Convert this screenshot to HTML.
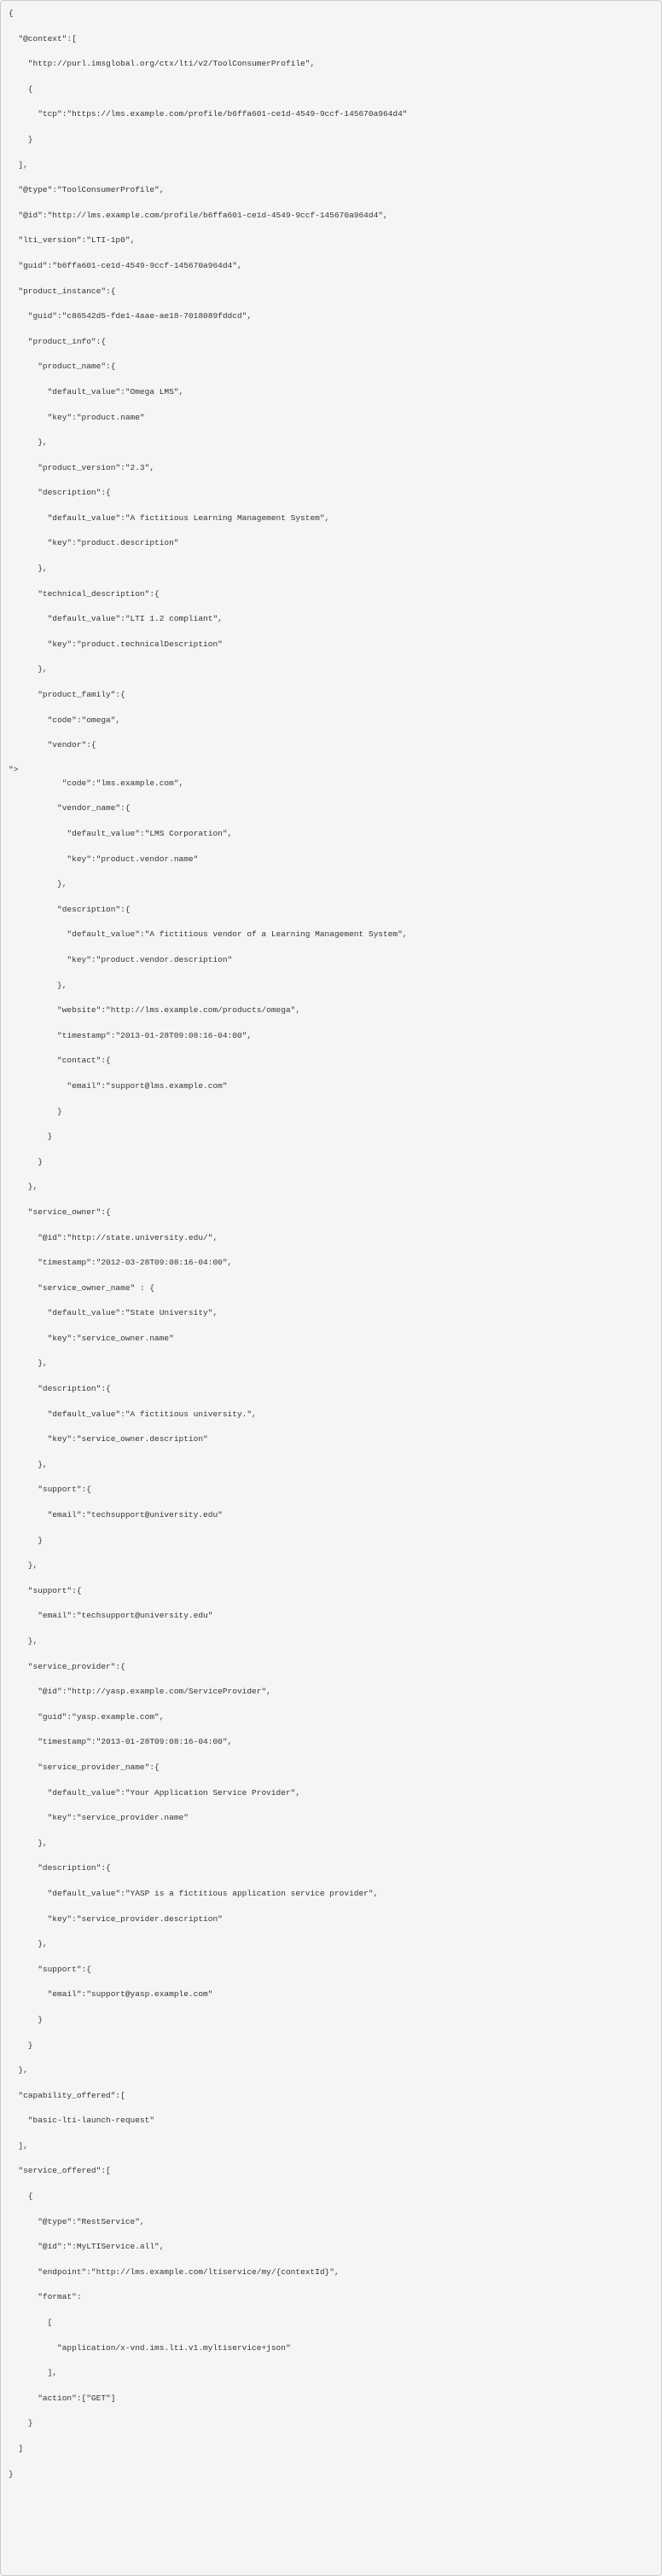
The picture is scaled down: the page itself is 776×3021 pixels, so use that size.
<!DOCTYPE html>
<html><head><meta charset="utf-8">
<style>
html,body{margin:0;padding:0;background:#fff;}
.box{position:absolute;left:0;top:0;width:774px;height:3019px;border:1px solid #ccc;border-radius:4px;background:#f5f5f5;}
.code{position:absolute;left:10px;top:1px;font-family:"Liberation Mono",monospace;font-size:9.5px;line-height:29.6px;color:#333;white-space:pre;}
.gap{position:relative;height:15px;}
.gap span{position:absolute;left:0;top:6.5px;line-height:15px;}
</style></head><body>
<div class="box"></div>
<div class="code"><div>{
  "@context":[
    "http://purl.imsglobal.org/ctx/lti/v2/ToolConsumerProfile",
    {
      "tcp":"https://lms.example.com/profile/b6ffa601-ce1d-4549-9ccf-145670a964d4"
    }
  ],
  "@type":"ToolConsumerProfile",
  "@id":"http://lms.example.com/profile/b6ffa601-ce1d-4549-9ccf-145670a964d4",
  "lti_version":"LTI-1p0",
  "guid":"b6ffa601-ce1d-4549-9ccf-145670a964d4",
  "product_instance":{
    "guid":"c86542d5-fde1-4aae-ae18-7018089fddcd",
    "product_info":{
      "product_name":{
        "default_value":"Omega LMS",
        "key":"product.name"
      },
      "product_version":"2.3",
      "description":{
        "default_value":"A fictitious Learning Management System",
        "key":"product.description"
      },
      "technical_description":{
        "default_value":"LTI 1.2 compliant",
        "key":"product.technicalDescription"
      },
      "product_family":{
        "code":"omega",
        "vendor":{</div><div class="gap"><span>"&gt;</span></div><div>           "code":"lms.example.com",
          "vendor_name":{
            "default_value":"LMS Corporation",
            "key":"product.vendor.name"
          },
          "description":{
            "default_value":"A fictitious vendor of a Learning Management System",
            "key":"product.vendor.description"
          },
          "website":"http://lms.example.com/products/omega",
          "timestamp":"2013-01-28T09:08:16-04:00",
          "contact":{
            "email":"support@lms.example.com"
          }
        }
      }
    },
    "service_owner":{
      "@id":"http://state.university.edu/",
      "timestamp":"2012-03-28T09:08:16-04:00",
      "service_owner_name" : {
        "default_value":"State University",
        "key":"service_owner.name"
      },
      "description":{
        "default_value":"A fictitious university.",
        "key":"service_owner.description"
      },
      "support":{
        "email":"techsupport@university.edu"
      }
    },
    "support":{
      "email":"techsupport@university.edu"
    },
    "service_provider":{
      "@id":"http://yasp.example.com/ServiceProvider",
      "guid":"yasp.example.com",
      "timestamp":"2013-01-28T09:08:16-04:00",
      "service_provider_name":{
        "default_value":"Your Application Service Provider",
        "key":"service_provider.name"
      },
      "description":{
        "default_value":"YASP is a fictitious application service provider",
        "key":"service_provider.description"
      },
      "support":{
        "email":"support@yasp.example.com"
      }
    }
  },
  "capability_offered":[
    "basic-lti-launch-request"
  ],
  "service_offered":[
    {
      "@type":"RestService",
      "@id":":MyLTIService.all",
      "endpoint":"http://lms.example.com/ltiservice/my/{contextId}",
      "format":
        [
          "application/x-vnd.ims.lti.v1.myltiservice+json"
        ],
      "action":["GET"]
    }
  ]
}</div></div>
</body></html>
